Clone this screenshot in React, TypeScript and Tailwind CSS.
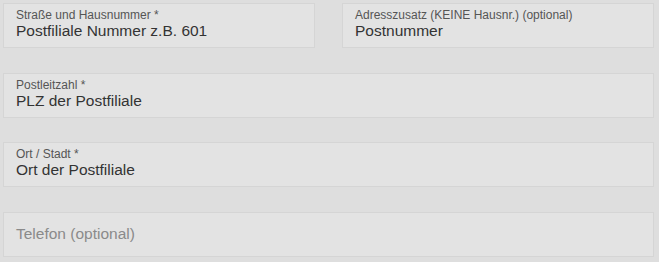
import React from "react";

function Field({
  label,
  value,
  className = "",
}: {
  label?: string;
  value: string;
  className?: string;
}) {
  return (
    <div
      className={`h-[45px] bg-[#e3e3e3] border border-[#d5d5d5] pl-[12px] flex flex-col ${
        label ? "pt-[4px]" : "justify-center"
      } ${className}`}
    >
      {label && (
        <span className="text-[12px] leading-[14px] text-[#555555]">{label}</span>
      )}
      <span
        className={`text-[15.5px] leading-[18px] ${
          label ? "text-[#333333]" : "text-[#8a8a8a]"
        }`}
      >
        {value}
      </span>
    </div>
  );
}

export default function App() {
  return (
    <div
      className="w-[659px] h-[262px] bg-[#dedede] pt-[3px] pl-[3px] pr-[5px] flex flex-col gap-[24.5px] overflow-hidden"
      style={{ fontFamily: '"Liberation Sans", Arial, sans-serif' }}
    >
      <div className="flex gap-[27px]">
        <Field
          className="flex-1"
          label="Straße und Hausnummer *"
          value="Postfiliale Nummer z.B. 601"
        />
        <Field
          className="flex-1"
          label="Adresszusatz (KEINE Hausnr.) (optional)"
          value="Postnummer"
        />
      </div>
      <Field label="Postleitzahl *" value="PLZ der Postfiliale" />
      <Field label="Ort / Stadt *" value="Ort der Postfiliale" />
      <Field value="Telefon (optional)" />
    </div>
  );
}
